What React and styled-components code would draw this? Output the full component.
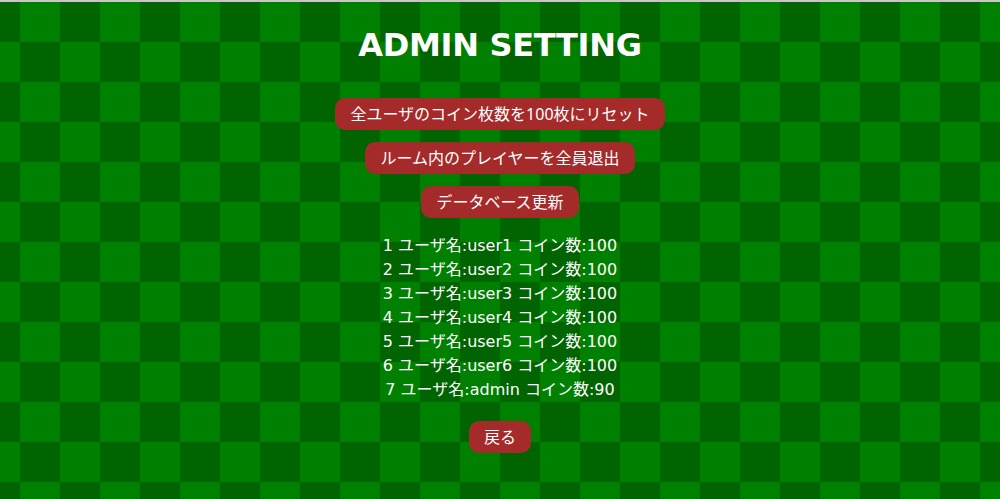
import React from "react";
import styled, { createGlobalStyle } from "styled-components";

const GlobalStyle = createGlobalStyle`
  html, body {
    margin: 0;
    padding: 0;
  }
  body {
    font-family: "DejaVu Sans", "Noto Sans CJK JP", sans-serif;
    color: #ffffff;
  }
`;

const Page = styled.div`
  box-sizing: border-box;
  min-height: 100vh;
  border-top: 2px solid #c8c8c8;
  background-color: #008000;
  background-image: conic-gradient(
    #006400 0 25%,
    transparent 0 50%,
    #006400 0 75%,
    transparent 0
  );
  background-size: 80px 80px;
  background-position: 20px 0;
  display: flex;
  flex-direction: column;
  align-items: center;
  text-align: center;
`;

const Title = styled.h1`
  margin: 23px 0 33px;
  font-family: "DejaVu Sans", "Noto Sans", sans-serif;
  font-size: 32px;
  line-height: 40px;
  font-weight: bold;
  letter-spacing: -0.3px;
`;

const ButtonStack = styled.div`
  display: flex;
  flex-direction: column;
  align-items: center;
  gap: 12px;
`;

const ActionButton = styled.button`
  font-family: "Noto Sans", "Noto Sans CJK JP", sans-serif;
  font-size: 16px;
  line-height: 24px;
  padding: 4px 15px;
  color: #ffffff;
  background: #a52a2a;
  border: none;
  border-radius: 10px;
  cursor: pointer;
`;

const UserList = styled.ul`
  list-style: none;
  margin: 16px 0 19px;
  padding: 0;
  font-family: "DejaVu Sans", "Noto Sans CJK JP", sans-serif;
  font-size: 16px;
  line-height: 24px;
`;

const UserItem = styled.li`
  margin: 0;
`;

const users = [
  { id: 1, name: "user1", coins: 100 },
  { id: 2, name: "user2", coins: 100 },
  { id: 3, name: "user3", coins: 100 },
  { id: 4, name: "user4", coins: 100 },
  { id: 5, name: "user5", coins: 100 },
  { id: 6, name: "user6", coins: 100 },
  { id: 7, name: "admin", coins: 90 },
];

export default function App() {
  return (
    <>
      <GlobalStyle />
      <Page>
        <Title>ADMIN SETTING</Title>
        <ButtonStack>
          <ActionButton>全ユーザのコイン枚数を100枚にリセット</ActionButton>
          <ActionButton>ルーム内のプレイヤーを全員退出</ActionButton>
          <ActionButton>データベース更新</ActionButton>
        </ButtonStack>
        <UserList>
          {users.map((u) => (
            <UserItem key={u.id}>
              {u.id} ユーザ名:{u.name} コイン数:{u.coins}
            </UserItem>
          ))}
        </UserList>
        <ActionButton>戻る</ActionButton>
      </Page>
    </>
  );
}
